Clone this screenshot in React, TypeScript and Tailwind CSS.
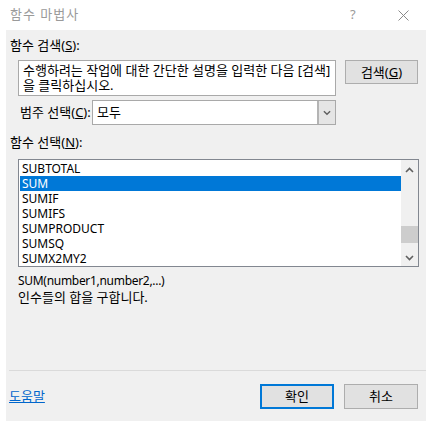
import React from "react";

const items = ["SUBTOTAL", "SUM", "SUMIF", "SUMIFS", "SUMPRODUCT", "SUMSQ", "SUMX2MY2"];

const Chevron = ({ up = false, className = "" }: { up?: boolean; className?: string }) => (
  <svg width="9" height="6" viewBox="0 0 9 6" className={className}>
    <path
      d={up ? "M1 5 L4.5 1.5 L8 5" : "M1 1 L4.5 4.5 L8 1"}
      fill="none"
      stroke="currentColor"
      strokeWidth="1.6"
    />
  </svg>
);

export default function App() {
  return (
    <div
      className="w-[426px] h-[421px] bg-white flex flex-col text-[12px] text-black overflow-hidden"
      style={{ fontFamily: '"Noto Sans", "Noto Sans CJK KR", sans-serif' }}
    >
      {/* title bar */}
      <div className="h-[30px] flex items-center pl-[10px] shrink-0">
        <span className="text-[#9a9a9a] text-[13px] tracking-[1px] flex-1">함수 마법사</span>
        <span className="text-[#9a9a9a] text-[13px] w-[10px] mr-[38px]">?</span>
        <svg width="11" height="11" viewBox="0 0 11 11" className="mr-[17px] text-[#8a8a8a]">
          <path d="M0.5 0.5 L10.5 10.5 M10.5 0.5 L0.5 10.5" stroke="currentColor" strokeWidth="1" />
        </svg>
      </div>

      <div className="flex-1 ml-[6px] bg-[#f0f0f0] flex flex-col">
        <div className="h-[30px] flex items-center pl-[4px] leading-none text-[13px]">
          함수 검색(<span className="underline">S</span>):
        </div>

        <div className="flex items-start">
          <div className="ml-[12px] w-[318px] h-[36px] bg-white border border-[#a9a9a9] px-[4px] pt-[2px] leading-[15px] text-[13px] whitespace-nowrap overflow-hidden">
            <div>수행하려는 작업에 대한 간단한 설명을 입력한 다음 [검색]</div>
            <div>을 클릭하십시오.</div>
          </div>
          <button className="ml-[9px] w-[73px] h-[24px] bg-[#e1e1e1] border border-[#adadad] flex items-center justify-center leading-none text-[13px]">
            검색(<span className="underline">G</span>)
          </button>
        </div>

        <div className="flex items-center mt-[4px]">
          <span className="ml-[14px] w-[72px] leading-none text-[13px] whitespace-nowrap">
            범주 선택(<span className="underline">C</span>):
          </span>
          <div className="w-[244px] h-[25px] bg-white border border-[#a9a9a9] flex">
            <span className="flex-1 pl-[4px] flex items-center leading-none text-[13px]">모두</span>
            <div className="w-[18px] bg-[#e5e5e5] border-l-2 border-[#b4b4b4] flex items-center justify-center text-[#606060]">
              <Chevron className="w-[8px]" />
            </div>
          </div>
        </div>

        <div className="h-[34px] flex items-center pl-[4px] leading-none text-[13px]">
          함수 선택(<span className="underline">N</span>):
        </div>

        <div className="ml-[12px] w-[401px] h-[108px] bg-white border border-[#828790] flex">
          <div className="flex-1 pt-[1px] pl-[1px]">
            {items.map((it) => (
              <div
                key={it}
                className={
                  "h-[15px] flex items-center pl-[2px] leading-none " +
                  (it === "SUM" ? "bg-[#0078d7] text-white" : "")
                }
              >
                {it}
              </div>
            ))}
          </div>
          <div className="w-[17px] bg-[#f0f0f0] flex flex-col items-center text-[#606060]">
            <div className="h-[17px] flex items-center justify-center mt-[1px]">
              <Chevron up />
            </div>
            <div className="flex-1 w-full flex flex-col">
              <div className="h-[48px]" />
              <div className="h-[17px] bg-[#cdcdcd]" />
            </div>
            <div className="h-[17px] flex items-center justify-center">
              <Chevron />
            </div>
          </div>
        </div>

        <div className="pl-[12px] mt-[5px] leading-[17px]">
          <div className="tracking-[-0.3px]">SUM(number1,number2,...)</div>
          <div className="text-[13px]">인수들의 합을 구합니다.</div>
        </div>

        <div className="flex-1" />

        <div className="ml-[3px] h-px bg-[#dadada]" />

        <div className="h-[50px] flex items-center pl-[3px]">
          <a className="text-[#0066cc] underline flex-1 leading-none text-[13px]">도움말</a>
          <button className="w-[74px] h-[25px] bg-[#e1e1e1] border-2 border-[#0078d7] flex items-center justify-center leading-none text-[13px]">
            확인
          </button>
          <button className="ml-[10px] mr-[8px] w-[74px] h-[25px] bg-[#e1e1e1] border border-[#adadad] flex items-center justify-center leading-none text-[13px]">
            취소
          </button>
        </div>
      </div>
    </div>
  );
}
